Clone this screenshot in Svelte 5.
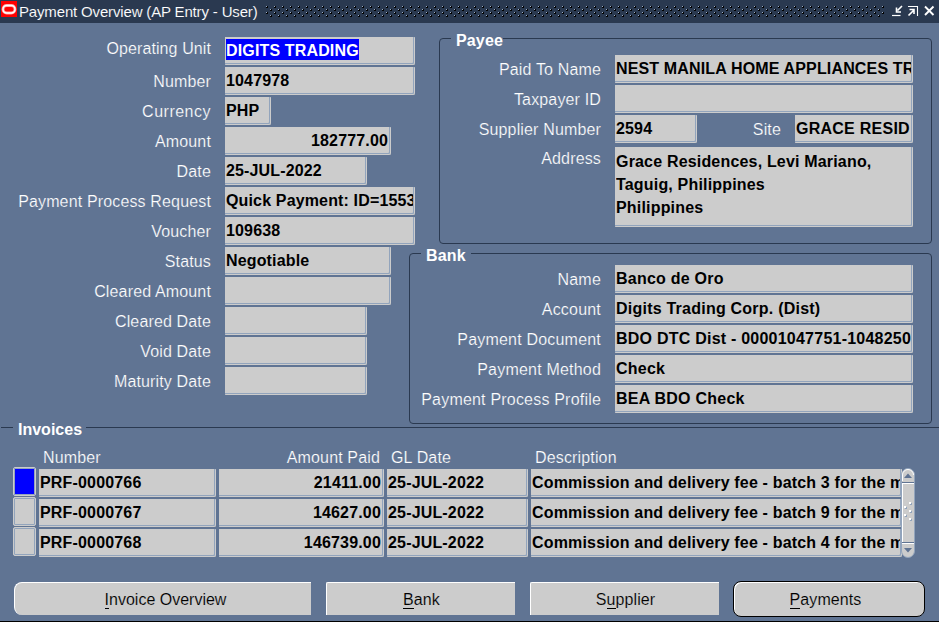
<script>
  const left = [
    { label: 'Operating Unit', value: 'DIGITS TRADING', w: 190, sel: true },
    { label: 'Number', value: '1047978', w: 190 },
    { label: 'Currency', value: 'PHP', w: 46 },
    { label: 'Amount', value: '182777.00', w: 166, right: true },
    { label: 'Date', value: '25-JUL-2022', w: 142 },
    { label: 'Payment Process Request', value: 'Quick Payment: ID=1553', w: 190 },
    { label: 'Voucher', value: '109638', w: 190 },
    { label: 'Status', value: 'Negotiable', w: 166 },
    { label: 'Cleared Amount', value: '', w: 166 },
    { label: 'Cleared Date', value: '', w: 142 },
    { label: 'Void Date', value: '', w: 142 },
    { label: 'Maturity Date', value: '', w: 142 }
  ];
  const bank = [
    { label: 'Name', value: 'Banco de Oro' },
    { label: 'Account', value: 'Digits Trading Corp. (Dist)' },
    { label: 'Payment Document', value: 'BDO DTC Dist - 00001047751-1048250' },
    { label: 'Payment Method', value: 'Check' },
    { label: 'Payment Process Profile', value: 'BEA BDO Check' }
  ];
  const invoices = [
    { number: 'PRF-0000766', amount: '21411.00', date: '25-JUL-2022', batch: 3 },
    { number: 'PRF-0000767', amount: '14627.00', date: '25-JUL-2022', batch: 9 },
    { number: 'PRF-0000768', amount: '146739.00', date: '25-JUL-2022', batch: 4 }
  ];
  let current = $state(0);
</script>

<div class="window">
  <header>
    <svg class="logo" width="16" height="16" viewBox="0 0 16 16">
      <path fill="#f00" d="M0 0h16v16H0z" />
      <rect x="2" y="4.500" width="12" height="7.500" rx="3.700" fill="none" stroke="#ff9c9c" stroke-width="2.8" />
      <rect x="2" y="4.500" width="12" height="7.500" rx="3.700" fill="none" stroke="#fff" stroke-width="1.3" />
    </svg>
    <h1>Payment Overview (AP Entry - User)</h1>
    <svg class="grip" height="12">
      <defs>
        <pattern id="dots" width="8" height="6" patternUnits="userSpaceOnUse">
          <path fill="#9fb0c8" d="M0 0h1v1h-1zM4 3h1v1h-1z" />
          <path fill="#000" d="M1 1h1v1h-1zM5 4h1v1h-1zM1 0h1v1h-1zM0 1h1v1h-1zM5 3h1v1h-1zM4 4h1v1h-1z" />
        </pattern>
      </defs>
      <rect width="100%" height="12" fill="url(#dots)" />
    </svg>
    <svg class="controls" width="44" height="12" viewBox="0 0 44 12" fill="none" stroke="#fff">
      <path d="M0 10.5h8.500" stroke-width="1.2" />
      <path d="M10 1L5.500 5.500M4.500 2.500v4.500h4.500" stroke-width="1.600" />
      <path d="M16 1.500h9.500V11" stroke-width="1.1" />
      <path d="M16.500 10.500l5-5M17.500 4.500h4.500V9" stroke-width="1.600" />
      <path d="M33 1.500l8.500 8.500M41.500 1.500L33 10" stroke-width="1.900" />
    </svg>
  </header>

  <main>
    <section class="payment">
      {#each left as f}
        <div class="row">
          <span class="label">{f.label}</span>
          <span class="field" class:right={f.right} style:width="{f.w}px"><span class:sel={f.sel}>{f.value}</span></span>
        </div>
      {/each}
    </section>
    <div class="groups">
      <section class="group payee">
        <h2>Payee</h2>
        <div class="row"><span class="label">Paid To Name</span><span class="field wide">NEST MANILA HOME APPLIANCES TR</span></div>
        <div class="row"><span class="label">Taxpayer ID</span><span class="field wide"></span></div>
        <div class="row">
          <span class="label">Supplier Number</span><span class="field supplier">2594</span>
          <span class="label site">Site</span><span class="field code">GRACE RESID</span>
        </div>
        <div class="row addr">
          <span class="label">Address</span>
          <span class="field wide address">Grace Residences, Levi Mariano,<br />Taguig, Philippines<br />Philippines</span>
        </div>
      </section>
      <section class="group bank">
        <h2>Bank</h2>
        {#each bank as f}
          <div class="row"><span class="label">{f.label}</span><span class="field wide">{f.value}</span></div>
        {/each}
      </section>
    </div>
  </main>

  <section class="invoices">
    <div class="rule"><h2>Invoices</h2></div>
    <div class="cols heads">
      <span></span><span class="hn">Number</span><span class="ha">Amount Paid</span><span class="hg">GL Date</span><span class="hd">Description</span>
    </div>
    <div class="table">
      <div class="lines">
        {#each invoices as v, i}
          <div class="cols">
            <button class="mark" class:on={i === current} aria-label={v.number} onclick={() => (current = i)}></button>
            <span class="field num">{v.number}</span>
            <span class="field right">{v.amount}</span>
            <span class="field date">{v.date}</span>
            <span class="field desc">Commission and delivery fee - batch {v.batch} for the m</span>
          </div>
        {/each}
      </div>
      <svg class="scroll" width="14" height="90" viewBox="0 0 14 90">
        <rect x=".5" y=".5" width="13" height="89" rx="6.5" fill="#ccc" stroke="#92a4bc" />
        <path d="M1.5 13V7a5.5 5.5 0 0 1 11 0" fill="none" stroke="#fff" />
        <path d="M1 14.5h12M1 74.5h12" stroke="#607493" />
        <path d="M1 15.5h12M1 75.5h12M1.5 16v58" stroke="#fff" />
        <path d="M3 10h8L7 5.500zM3 80h8l-4 4.500z" fill="#607493" />
        <g fill="#fff"><path d="M8 34h2v2H8zM3 38h2v2H3zM8 42h2v2H8zM3 46h2v2H3zM8 50h2v2H8z" /></g>
        <g fill="#92a4bc"><path d="M10 35h1v2H9v-1h1zM5 39h1v2H4v-1h1zM10 43h1v2H9v-1h1zM5 47h1v2H4v-1h1zM10 51h1v2H9v-1h1z" /></g>
      </svg>
    </div>
  </section>

  <footer>
    <button class="btn first"><span><u>I</u>nvoice Overview</span></button>
    <button class="btn"><span><u>B</u>ank</span></button>
    <button class="btn"><span>S<u>u</u>pplier</span></button>
    <button class="btn last"><span><u>P</u>ayments</span></button>
  </footer>
</div>

<style>
  .window {
    width: 939px;
    height: 622px;
    box-sizing: border-box;
    display: flex;
    flex-direction: column;
    overflow: hidden;
    background: #607493;
    border-bottom: 1px solid #000;
    color: #fff;
    font: 16px/20px "Liberation Sans", Arial, sans-serif;
    letter-spacing: 0.15px;
  }
  header {
    height: 23px;
    flex: none;
    display: flex;
    background: #2a3950;
  }
  .logo { margin: 1px 0 0 1px; flex: none; }
  h1 { margin: 2px 0 0 2px; width: 247px; flex: none; font-size: 15px; font-weight: 400; white-space: nowrap; letter-spacing: -0.16px; -webkit-text-stroke: 0.1px #2a3950; }
  .grip { flex: none; width: 619px; margin-top: 6px; }
  .controls { margin: 5px 0 0 7px; flex: none; }
  main { display: flex; height: 404px; flex: none; }
  h2 { margin: 0; font-size: 16px; line-height: 20px; font-weight: 700; letter-spacing: 0.15px; }
  .row { display: flex; height: 28px; margin-bottom: 2px; }
  .label { flex: none; text-align: right; line-height: 30px; white-space: nowrap; }
  .label, .heads { -webkit-text-stroke: 0.2px #607493; }
  .payment { width: 409px; flex: none; padding-top: 14px; }
  .payment .label { width: 211px; margin-right: 14px; }
  .payment .row:first-child .label { line-height: 24px; letter-spacing: 0.1px; }
  .payment .row:nth-child(3) .label { letter-spacing: 0.5px; }
  .field {
    box-sizing: border-box;
    height: 28px;
    flex: none;
    overflow: clip;
    overflow-clip-margin: content-box;
    white-space: nowrap;
    background: #ccc;
    color: #000;
    font-weight: 700;
    line-height: 24px;
    padding: 2px 1px 0 1px;
    border: solid #ccc;
    border-width: 0 1px 1px 0;
    border-radius: 0 1px 2px 1px;
    box-shadow: inset -1px -1px #92a4bc;
  }
  .right { text-align: right; padding-right: 2px; }
  .sel { display: block; width: max-content; height: 22px; margin-top: -1px; line-height: 25px; background: #00f; color: #fff; }
  .groups { padding-top: 15px; width: 523px; flex: none; }
  .group { position: relative; box-sizing: border-box; border: 1px solid #2a3950; border-radius: 4px; }
  .group h2 { position: absolute; left: 11px; top: -8px; padding: 0 5px; background: #607493; }
  .payee { height: 206px; margin: 0 0 9px 30px; padding-top: 16px; }
  .payee h2 { padding-right: 0; }
  .bank { height: 171px; padding-top: 11px; }
  .bank .row { letter-spacing: 0.23px; }
  .bank .row .label { letter-spacing: 0.2px; }
  .group .label { width: 191px; margin-right: 14px; }
  .payee .label { width: 161px; }
  .wide { width: 298px; }
  .supplier { width: 82px; }
  .payee .site { width: 84px; }
  .code { width: 118px; letter-spacing: 0.25px; }
  .addr { margin-top: 4px; }
  .addr .label { line-height: 23px; }
  .address { height: 80px; line-height: 23px; padding-top: 3px; letter-spacing: 0.18px; }
  .invoices { flex: none; height: 155px; }
  .rule { display: flex; align-items: flex-start; height: 21px; }
  .rule::before, .rule::after { content: ""; height: 1px; background: #2a3950; }
  .rule::before { width: 12px; margin-left: 1px; }
  .rule::after { flex: 1; }
  .rule h2 { margin-top: -7px; padding: 0 4px 0 5px; letter-spacing: 0; }
  .heads { height: 20px; line-height: 20px; }
  .cols { display: grid; grid-template-columns: 23px 177px 165px 141px 371px; column-gap: 3px; }
  .hn { padding-left: 4px; }
  .ha { text-align: right; padding-right: 4px; }
  .hg, .hd { padding-left: 4px; }
  .invoices .cols { margin-left: 13px; }
  .lines .cols { height: 30px; }
  .lines .field { letter-spacing: 0.17px; }
  .table { display: flex; padding-top: 1px; }
  .lines { width: 901px; }
  .mark { width: 23px; height: 29px; margin-top: -2px; box-sizing: border-box; padding: 0; background: #ccc; border: 1px solid #ccc; border-radius: 2px; box-shadow: inset 0 0 0 1px #92a4bc; }
  .mark.on { background: #00f; }
  .scroll { flex: none; margin-top: -1px; }
  footer { display: flex; padding-left: 14px; gap: 15px; }
  .btn { font: inherit; letter-spacing: 0.1px; color: #000; height: 33px; width: 189px; padding: 1px 0 0 1px; margin: 0; flex: none; background: #ccc; border: solid #fff; border-width: 1px 0 0 1px; border-radius: 2px 0 0 0; -webkit-text-stroke: 0.15px #ccc; }
  .btn u { display: inline-block; line-height: 16px; text-decoration: none; border-bottom: 1px solid #000; }
  .first { width: 297px; border-radius: 8px 0 0 8px; padding-left: 5px; letter-spacing: 0; }
  .last { width: 192px; height: 36px; margin: -1px 0 0 -1px; padding: 2px 7px 0 0; border: 1px solid #000; border-radius: 8px; box-shadow: inset 1px 1px #fff; }
</style>
